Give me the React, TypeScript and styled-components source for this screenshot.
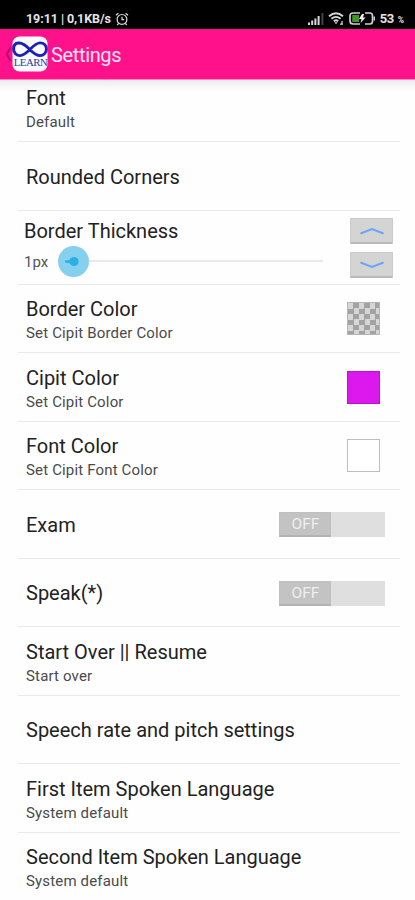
import React from "react";
import styled, { createGlobalStyle } from "styled-components";

const GlobalStyle = createGlobalStyle`
  * { box-sizing: border-box; }
  body { margin: 0; background: #fefefe; font-family: Roboto, "Liberation Sans", sans-serif; }
`;

const Screen = styled.div`
  width: 415px;
  height: 900px;
  overflow: hidden;
  display: flex;
  flex-direction: column;
  background: #fefefe;
  color: #222;
`;

const StatusBar = styled.div`
  flex: 0 0 29px;
  display: flex;
  align-items: center;
  justify-content: space-between;
  padding: 8px 11px 0 26px;
  background: #000;
  color: #e4e4e4;
`;

const StatusGroup = styled.div<{ $gap: number }>`
  display: flex;
  align-items: center;
  gap: ${(p) => p.$gap}px;
`;

const StatusText = styled.span<{ $size: number; $spacing: number; $drop?: number }>`
  font-size: ${(p) => p.$size}px;
  line-height: 14px;
  font-weight: 700;
  letter-spacing: ${(p) => p.$spacing}px;
  padding-top: ${(p) => p.$drop ?? 0}px;
  white-space: pre;
`;

const AppBar = styled.header`
  flex: 0 0 51px;
  display: flex;
  align-items: center;
  padding-left: 5px;
  background: #ff118b;
  border-bottom: 1px solid #f984c0;
  color: #ffe3f2;
`;

const AppTitle = styled.h1`
  margin: 2px 0 0 3px;
  font-size: 20px;
  line-height: 24px;
  font-weight: 400;
  letter-spacing: -0.35px;
`;

const List = styled.main`
  display: flex;
  flex-direction: column;
  background: linear-gradient(#ececec, #fefefe 11px);
`;

const Row = styled.section<{ $height: number; $last?: boolean }>`
  height: ${(p) => p.$height}px;
  margin: 0 15px 0 18px;
  padding: 0 15px 0 8px;
  display: flex;
  align-items: center;
  justify-content: space-between;
  border-bottom: ${(p) => (p.$last ? "0" : "1px solid #e9e9e9")};
`;

const Labels = styled.div<{ $shift: number }>`
  padding-top: ${(p) => Math.max(p.$shift, 0)}px;
  padding-bottom: ${(p) => Math.max(-p.$shift, 0)}px;
  white-space: pre;
`;

const Title = styled.div`
  font-size: 20px;
  line-height: 24px;
`;

const Summary = styled.div`
  font-size: 15px;
  line-height: 18px;
  margin-top: 3px;
  letter-spacing: 0.16px;
  color: #4a4a4a;
`;

const Swatch = styled.div<{ $fill: string; $edge: string }>`
  width: 33px;
  height: 33px;
  margin: 1px 5px 0 0;
  border: 1px solid ${(p) => p.$edge};
  background: ${(p) => p.$fill};
`;

const Switch = styled.div`
  width: 106px;
  height: 25px;
  margin-top: 2px;
  display: flex;
  background: #dfdfdf;
`;

const SwitchThumb = styled.div`
  width: 52px;
  height: 25px;
  padding-left: 1px;
  border: 1px solid #bfbfbf;
  border-bottom: 2px solid #b3b3b3;
  background: #c3c3c3;
  color: #eee;
  font-size: 15.5px;
  line-height: 23px;
  text-align: center;
`;

const StepperRow = styled(Row)`
  padding: 0 7px 0 6px;
`;

const SliderColumn = styled.div`
  flex: 0 0 299px;
  padding-top: 1px;
`;

const SliderLine = styled.div`
  display: flex;
  align-items: center;
  height: 30px;
  margin-top: 3px;
`;

const SliderValue = styled.span`
  flex: 0 0 34px;
  padding-top: 2px;
  font-size: 15px;
  color: #555;
`;

const SliderThumb = styled.div`
  flex: 0 0 31px;
  height: 31px;
  border-radius: 50%;
  background: #85d0ef;
`;

const SliderTrack = styled.div`
  flex: 1;
  height: 2px;
  background: #e9e9e9;
`;

const Stepper = styled.div`
  display: flex;
  flex-direction: column;
  gap: 8px;
  padding-top: 2px;
`;

const StepButton = styled.button`
  width: 43px;
  height: 26px;
  padding: 0;
  border: 1px solid #cbcbcb;
  border-bottom: 2px solid #b9b9b9;
  border-radius: 1px;
  background: #d4d4d4;
  display: flex;
  align-items: center;
  justify-content: center;
`;

const CHECKER = "repeating-conic-gradient(#a3a3a3 0 25%, #d6d6d6 0 50%) 0 0 / 11px 11px";

const AlarmIcon = () => (
  <svg width="14" height="14" viewBox="0 0 14 14" fill="none" stroke="#ddd" strokeWidth="1.2">
    <circle cx="7" cy="7.4" r="4.9" />
    <path d="M7 4.8v2.8h2.2M1 3.3 3.4 1.2M13 3.3l-2.4-2.1M3.6 11.4 2.3 13M10.4 11.4l1.3 1.6" />
  </svg>
);

const SignalIcon = () => (
  <svg width="16" height="12" viewBox="0 0 16 12" fill="#d8d8d8">
    <path d="M0 9.5h2V12H0zM3.2 7.5h2V12h-2zM6.4 5.5h2V12h-2zM9.6 3h2v9h-2z" />
    <path d="M13.4 0h2v12h-2z" fill="#444" />
  </svg>
);

const WifiIcon = () => (
  <svg width="17" height="13" viewBox="0 0 17 13" fill="none" stroke="#d8d8d8" strokeWidth="1.8">
    <path d="M1 4.2Q8 -1.8 15 4.2M3.4 6.8Q8 3 12.6 6.8M5.8 9.2Q8 7.4 10.2 9.2" />
    <path d="m6.4 10.2 1.6 2 1.6-2z" fill="#d8d8d8" stroke="none" />
    <path d="M12 12.2h3M14 9v3" strokeWidth="1.2" />
  </svg>
);

const BatteryIcon = () => (
  <svg width="27" height="13" viewBox="0 0 27 13" fill="none">
    <path d="M11 1H4.2Q1 1 1 4v5q0 3 3.2 3H11M16 1h5q2.5 0 2.5 3v5q0 3-2.5 3h-5" stroke="#d0d0d0" strokeWidth="1.7" />
    <path d="M3.2 3H10v7H3.2z" fill="#42932a" />
    <path d="m13 2-3 5h2.5L11.5 11l5-5.5H14L15 2z" fill="#eee" />
    <path d="M24.5 4.5H26v4h-1.5z" fill="#d0d0d0" />
  </svg>
);

const AppLogo = () => (
  <svg width="43" height="36" viewBox="0 0 43 36" overflow="visible">
    <path d="M5.5 11.5 1.8 18l3.7 7" fill="none" stroke="#b80d70" strokeWidth="2" />
    <rect x="7.5" y="0.5" width="35" height="35" rx="7" fill="#fafaff" />
    <path
      d="M24.5 13.2C20 8.4 16.8 6.8 13.6 7 10 7.2 8.6 10 8.6 12.9c0 3.7 2.8 6.7 6.5 6.7 7.5 0 12.5-12.7 20-12.7 3.7 0 6.3 2.5 6.3 6.2 0 3.9-2.8 6.5-6.4 6.5-4.2 0-7.3-3.1-10.5-6.4z"
      fill="none"
      stroke="#1c22b8"
      strokeWidth="2.9"
    />
    <text x="8.7" y="29.5" fontFamily="Liberation Serif, serif" fontSize="10.8" letterSpacing="-0.45" fill="#273f96">
      LEARN
    </text>
  </svg>
);

const Chevron = ({ down = false }: { down?: boolean }) => (
  <svg width="24" height="8" viewBox="0 0 24 8" fill="none" stroke="#68a7f5" strokeWidth="2">
    <path d={down ? "M.5 1.5 12 6 23.5 1.5" : "M.5 6.5 12 2 23.5 6.5"} />
  </svg>
);

const ThumbDot = () => (
  <svg width="31" height="31" viewBox="0 0 31 31" fill="#2daee5">
    <circle cx="16" cy="15.5" r="4.6" />
    <path d="M7 14.5q5 .2 7-2.5v7q-2-2.5-7-2.5z" />
  </svg>
);

type SettingProps = {
  title: string;
  summary?: string;
  height?: number;
  shift?: number;
  last?: boolean;
  children?: React.ReactNode;
};

const Setting = ({ title, summary, height = 68.5, shift = 0, last, children }: SettingProps) => (
  <Row $height={height} $last={last}>
    <Labels $shift={shift}>
      <Title>{title}</Title>
      {summary && <Summary>{summary}</Summary>}
    </Labels>
    {children}
  </Row>
);

const OffSwitch = () => (
  <Switch role="switch" aria-checked="false">
    <SwitchThumb>OFF</SwitchThumb>
  </Switch>
);

export default function App() {
  return (
    <>
      <GlobalStyle />
      <Screen>
        <StatusBar>
          <StatusGroup $gap={4}>
            <StatusText $size={12.5} $spacing={-0.07}>19:11 | 0,1KB/s</StatusText>
            <AlarmIcon />
          </StatusGroup>
          <StatusGroup $gap={4}>
            <SignalIcon />
            <WifiIcon />
            <BatteryIcon />
            <StatusText $size={13} $spacing={-0.5}>53</StatusText>
            <StatusText $size={8.5} $spacing={0} $drop={3}>%</StatusText>
          </StatusGroup>
        </StatusBar>
        <AppBar>
          <AppLogo />
          <AppTitle>Settings</AppTitle>
        </AppBar>
        <List>
          <Setting title="Font" summary="Default" height={62} shift={-5} />
          <Setting title="Rounded Corners" height={69} shift={2} />
          <StepperRow $height={73.5}>
            <SliderColumn>
              <Title>Border Thickness</Title>
              <SliderLine>
                <SliderValue>1px</SliderValue>
                <SliderThumb><ThumbDot /></SliderThumb>
                <SliderTrack />
              </SliderLine>
            </SliderColumn>
            <Stepper>
              <StepButton aria-label="Increase"><Chevron /></StepButton>
              <StepButton aria-label="Decrease"><Chevron down /></StepButton>
            </Stepper>
          </StepperRow>
          <Setting title="Border Color" summary="Set Cipit Border Color" shift={3}>
            <Swatch $fill={CHECKER} $edge="#b5b5b5" />
          </Setting>
          <Setting title="Cipit Color" summary="Set Cipit Color" shift={4}>
            <Swatch $fill="#dd18ee" $edge="#b517c6" />
          </Setting>
          <Setting title="Font Color" summary="Set Cipit Font Color" shift={3}>
            <Swatch $fill="#fff" $edge="#bdbdbd" />
          </Setting>
          <Setting title="Exam" shift={2}><OffSwitch /></Setting>
          <Setting title="Speak(*)" shift={2}><OffSwitch /></Setting>
          <Setting title="Start Over || Resume" summary="Start over" shift={3} />
          <Setting title="Speech rate and pitch settings" shift={2} />
          <Setting title="First Item Spoken Language" summary="System default" shift={3} />
          <Setting title="Second Item Spoken Language" summary="System default" shift={2} last />
        </List>
      </Screen>
    </>
  );
}
